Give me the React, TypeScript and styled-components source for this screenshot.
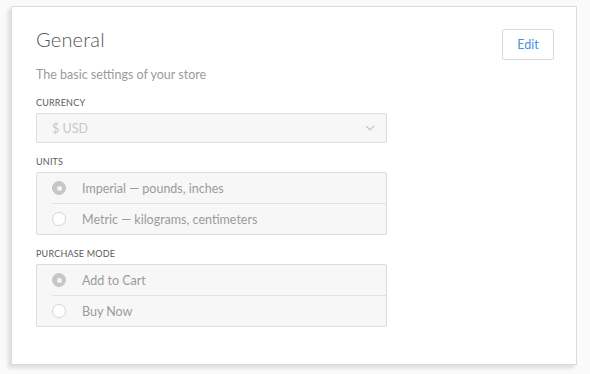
import React from "react";
import styled, { createGlobalStyle } from "styled-components";

const Global = createGlobalStyle`
  html, body {
    margin: 0;
    padding: 0;
    background: #ffffff;
  }
  body {
    font-family: "Lato", "Open Sans", sans-serif;
    -webkit-font-smoothing: antialiased;
  }
`;

const Page = styled.div`
  width: 590px;
  height: 374px;
  box-sizing: border-box;
  padding: 6px 13px 9px 11px;
  background: #fafafa;
`;

const Card = styled.section`
  height: 100%;
  box-sizing: border-box;
  background: #ffffff;
  border: 1px solid #dcdcdc;
  box-shadow: -3px 3px 4px rgba(0, 0, 0, 0.12);
  padding: 18px 22px 0 24px;
  display: flex;
  flex-direction: column;
`;

const Header = styled.div`
  display: flex;
  justify-content: space-between;
  align-items: flex-start;
`;

const Titles = styled.div`
  display: flex;
  flex-direction: column;
`;

const Title = styled.h1`
  margin: 0;
  font-size: 20px;
  font-weight: 300;
  color: #555;
  line-height: 28px;
  letter-spacing: 0.2px;
`;

const Subtitle = styled.p`
  margin: 14px 0 0 0;
  font-size: 12.5px;
  color: #9b9b9b;
  line-height: 16px;
`;

const EditButton = styled.button`
  margin-top: 4px;
  width: 52px;
  height: 31px;
  background: #fff;
  border: 1px solid #d9d9d9;
  border-radius: 2px;
  font-family: inherit;
  font-size: 12.5px;
  color: #4a90e2;
  cursor: pointer;
`;

const Field = styled.div<{ $gap: number }>`
  width: 351px;
  display: flex;
  flex-direction: column;
  margin-top: ${(p) => p.$gap}px;
`;

const Label = styled.div`
  font-size: 9px;
  letter-spacing: 0.2px;
  color: #5a5a5a;
  line-height: 12px;
  margin-bottom: 4px;
  text-transform: uppercase;
`;

const Select = styled.div`
  height: 30px;
  box-sizing: border-box;
  border: 1px solid #dcdcdc;
  border-radius: 2px;
  background: #f7f7f7;
  display: flex;
  align-items: center;
  justify-content: space-between;
  padding: 0 11px 0 15px;
  font-size: 12.5px;
  color: #c8c8c8;
`;

const Group = styled.div`
  box-sizing: border-box;
  border: 1px solid #dcdcdc;
  border-radius: 2px;
  background: #f7f7f7;
  padding-left: 15px;
`;

const Option = styled.div`
  height: 30px;
  display: flex;
  align-items: center;
  gap: 16px;
  font-size: 12.5px;
  color: #9b9b9b;
  & + & {
    border-top: 1px solid #e3e3e3;
  }
`;

const Radio = styled.span<{ $checked?: boolean }>`
  width: 14px;
  height: 14px;
  box-sizing: border-box;
  border-radius: 50%;
  background: ${(p) => (p.$checked ? "#c6c6c6" : "#fff")};
  border: 1px solid ${(p) => (p.$checked ? "#c6c6c6" : "#d6d6d6")};
  display: flex;
  align-items: center;
  justify-content: center;
  flex-shrink: 0;
  &::after {
    content: "";
    display: ${(p) => (p.$checked ? "block" : "none")};
    width: 5px;
    height: 5px;
    border-radius: 50%;
    background: #f4f4f4;
  }
`;

const Chevron = () => (
  <svg width="10" height="6" viewBox="0 0 10 6" fill="none">
    <path d="M1 1l4 4 4-4" stroke="#c4c4c4" strokeWidth="1.1" />
  </svg>
);

const options = {
  units: [
    { label: "Imperial — pounds, inches", checked: true },
    { label: "Metric — kilograms, centimeters", checked: false },
  ],
  purchase: [
    { label: "Add to Cart", checked: true },
    { label: "Buy Now", checked: false },
  ],
};

const App = () => {
  return (
    <React.Fragment>
      <Global />
      <Page>
        <Card>
          <Header>
            <Titles>
              <Title>General</Title>
              <Subtitle>The basic settings of your store</Subtitle>
            </Titles>
            <EditButton>Edit</EditButton>
          </Header>
          <Field $gap={14}>
            <Label>Currency</Label>
            <Select>
              <span>$ USD</span>
              <Chevron />
            </Select>
          </Field>
          <Field $gap={13}>
            <Label>Units</Label>
            <Group>
              {options.units.map((o) => (
                <Option key={o.label}>
                  <Radio $checked={o.checked} />
                  {o.label}
                </Option>
              ))}
            </Group>
          </Field>
          <Field $gap={13}>
            <Label>Purchase mode</Label>
            <Group>
              {options.purchase.map((o) => (
                <Option key={o.label}>
                  <Radio $checked={o.checked} />
                  {o.label}
                </Option>
              ))}
            </Group>
          </Field>
        </Card>
      </Page>
    </React.Fragment>
  );
};

export default App;
